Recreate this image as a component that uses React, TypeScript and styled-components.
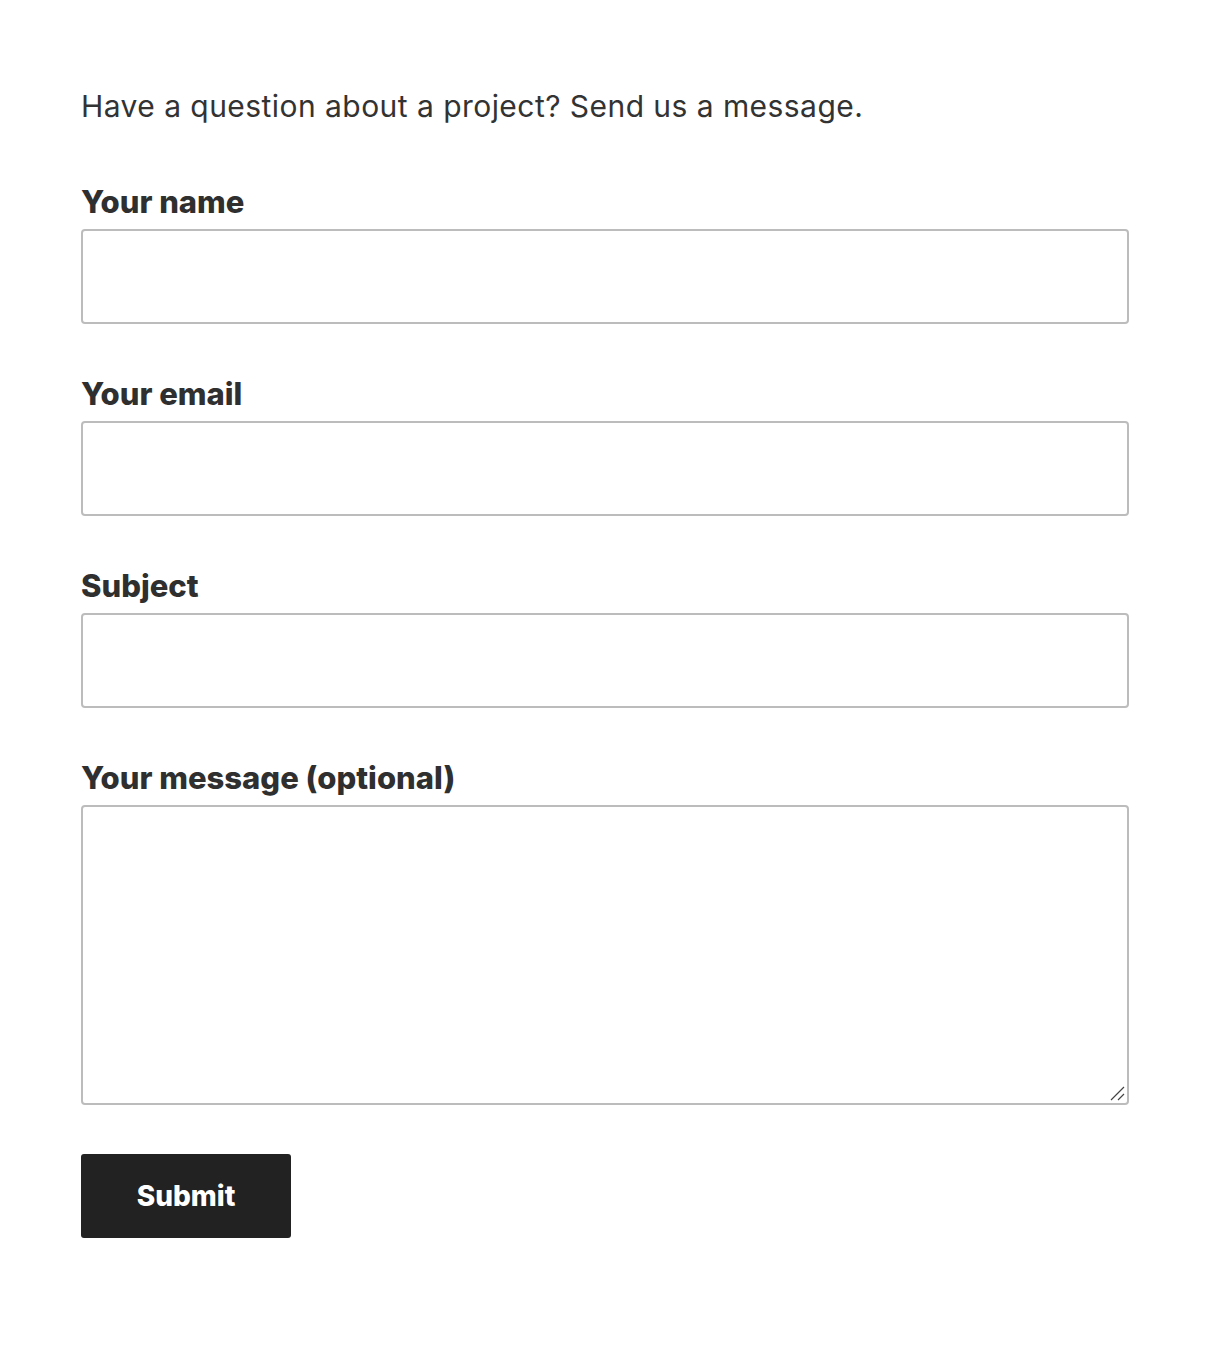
import React from 'react'
import styled, { createGlobalStyle } from 'styled-components'

const GlobalStyle = createGlobalStyle`
  html, body {
    margin: 0;
    padding: 0;
    background: #fff;
  }
  body {
    font-family: Inter, 'Liberation Sans', sans-serif;
    color: #333;
  }
`

const Page = styled.main`
  padding: 84px 79px 120px 81px;
  max-width: 1048px;
`

const Intro = styled.p`
  margin: 0 0 57px;
  font-size: 30px;
  line-height: 44px;
  font-weight: 400;
  letter-spacing: 0.015em;
  color: #333;
`

const Form = styled.form`
  display: flex;
  flex-direction: column;
  gap: 53px;
`

const Field = styled.div`
  display: flex;
  flex-direction: column;
`

const Label = styled.label`
  display: block;
  font-size: 31px;
  line-height: 34px;
  padding-bottom: 10px;
  font-weight: 800;
  letter-spacing: 0;
  color: #2f2f2f;
`

const TextInput = styled.input`
  box-sizing: border-box;
  width: 100%;
  height: 95px;
  border: 2px solid #bcbcbc;
  border-radius: 4px;
  padding: 0 16px;
  font: inherit;
  font-size: 24px;
  background: #fff;
  outline: none;
`

const AreaWrap = styled.div`
  position: relative;
`

const TextArea = styled.textarea`
  box-sizing: border-box;
  width: 100%;
  height: 300px;
  border: 2px solid #bcbcbc;
  border-radius: 4px;
  padding: 16px;
  font: inherit;
  font-size: 24px;
  background: #fff;
  outline: none;
  resize: none;
  display: block;
`

const ResizeGrip = styled.svg`
  position: absolute;
  right: 4px;
  bottom: 4px;
  width: 16px;
  height: 16px;
  pointer-events: none;
`

const SubmitButton = styled.button`
  align-self: flex-start;
  margin-top: -4px;
  width: 210px;
  height: 84px;
  border: none;
  border-radius: 3px;
  background: #222;
  color: #fff;
  font-family: Inter, 'Liberation Sans', sans-serif;
  font-size: 28px;
  font-weight: 800;
  letter-spacing: 0;
  cursor: pointer;
`

export default function App() {
  return (
    <>
      <GlobalStyle />
      <Page>
        <Intro>Have a question about a project? Send us a message.</Intro>
        <Form onSubmit={(e) => e.preventDefault()}>
          <Field>
            <Label htmlFor="name">Your name</Label>
            <TextInput id="name" type="text" />
          </Field>
          <Field>
            <Label htmlFor="email">Your email</Label>
            <TextInput id="email" type="email" />
          </Field>
          <Field>
            <Label htmlFor="subject">Subject</Label>
            <TextInput id="subject" type="text" />
          </Field>
          <Field>
            <Label htmlFor="message">Your message (optional)</Label>
            <AreaWrap>
              <TextArea id="message" />
              <ResizeGrip viewBox="0 0 16 16">
                <path d="M2 15 L15 2 M9 15 L15 9" stroke="#444" strokeWidth="1.2" fill="none" />
              </ResizeGrip>
            </AreaWrap>
          </Field>
          <SubmitButton type="submit">Submit</SubmitButton>
        </Form>
      </Page>
    </>
  )
}
